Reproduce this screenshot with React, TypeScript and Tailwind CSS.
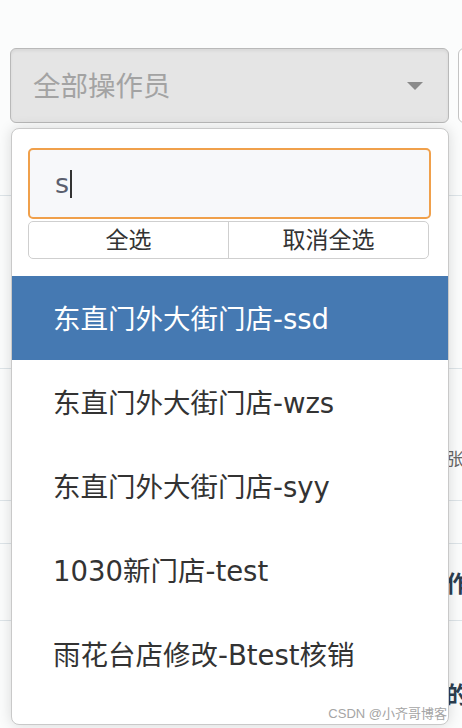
import React from "react";

const items = [
  "东直门外大街门店-ssd",
  "东直门外大街门店-wzs",
  "东直门外大街门店-syy",
  "1030新门店-test",
  "雨花台店修改-Btest核销",
  "雨花台店修改-核销",
];

export default function App() {
  return (
    <div
      className="relative w-[462px] h-[728px] overflow-hidden bg-[#fbfcfc] text-[#333]"
      style={{ fontFamily: '"DejaVu Sans", "Noto Sans CJK SC", sans-serif' }}
    >
      {/* header selects */}
      <div className="flex gap-[9px] pt-[48px] pl-[10px]">
        <div className="relative flex h-[75px] w-[439px] shrink-0 items-center rounded-[6px] border border-[#b9b9b9] bg-[#e5e5e5] shadow-[inset_0_2px_3px_rgba(0,0,0,0.06)] pl-[22px] pr-[25px]">
          <span className="flex-1 pt-[3px] text-[27.5px] leading-none text-[#a3a3a3]">全部操作员</span>
          <svg width="16" height="8" viewBox="0 0 16 8">
            <polygon points="0,0 16,0 8,8" fill="#8a8a8a" />
          </svg>
        </div>
        <div className="h-[75px] w-[40px] shrink-0 rounded-[6px] border border-[#c4c4c4] bg-white" />
      </div>

      {/* background table */}
      <div className="mt-[72px] text-[#2c3e50]" style={{ fontFamily: '"Noto Sans CJK SC", sans-serif' }}>
        <div className="h-[173px] border-t border-[#dde4e8]" />
        <div className="flex h-[132px] items-start border-t border-[#dde4e8] pl-[447px] pt-[80px] whitespace-nowrap">
          <span className="text-[17px] leading-none text-[#666]">张</span>
        </div>
        <div className="h-[43px] border-t border-[#dde4e8]" />
        <div className="flex h-[77px] items-center border-t border-[#dde4e8] pl-[446px] whitespace-nowrap">
          <span className="text-[23px] leading-none font-bold">作</span>
        </div>
        <div className="flex h-[108px] items-start border-t border-[#dde4e8] pl-[446px] pt-[61px] whitespace-nowrap">
          <span className="text-[23px] leading-none font-bold">的</span>
        </div>
      </div>

      {/* dropdown panel */}
      <div className="absolute left-[11px] top-[128px] h-[597px] w-[438px] overflow-hidden rounded-[8px] border border-[#c9c9c9] bg-white shadow-[0_0_14px_rgba(0,0,0,0.14)]">
        <div className="px-[16px] pt-[19px]">
          <div className="flex h-[71px] w-[403px] items-center rounded-[5px] border-2 border-[#f0a04b] bg-[#f7f8fa] pl-[25px]">
            <span className="text-[27px] leading-none text-[#5b5f6e]">s</span>
            <span className="ml-[1px] h-[28px] w-[1.5px] bg-[#333]" />
          </div>
          <div className="mt-[2px] flex h-[38px] w-[401px] rounded-[5px] border border-[#cfcfcf] text-[23px] leading-none text-[#333]">
            <div className="flex flex-1 items-center justify-center border-r border-[#cfcfcf]">全选</div>
            <div className="flex flex-1 items-center justify-center">取消全选</div>
          </div>
        </div>
        <div className="mt-[17px]">
          {items.map((t, i) => (
            <div
              key={i}
              className={
                i === 0
                  ? "flex h-[84px] items-center bg-[#4579b2] pl-[41px] pt-[4px] text-[27.5px] leading-none text-white"
                  : "flex h-[84px] items-center pl-[41px] pt-[4px] text-[27.5px] leading-none text-[#333]"
              }
            >
              {t}
            </div>
          ))}
        </div>
      </div>

      <div
        className="absolute right-[15px] top-[704px] text-[13px] text-[#a5a5a5]"
        style={{ fontFamily: '"Liberation Sans", "Noto Sans CJK SC", sans-serif' }}
      >
        CSDN @小齐哥博客
      </div>
    </div>
  );
}
